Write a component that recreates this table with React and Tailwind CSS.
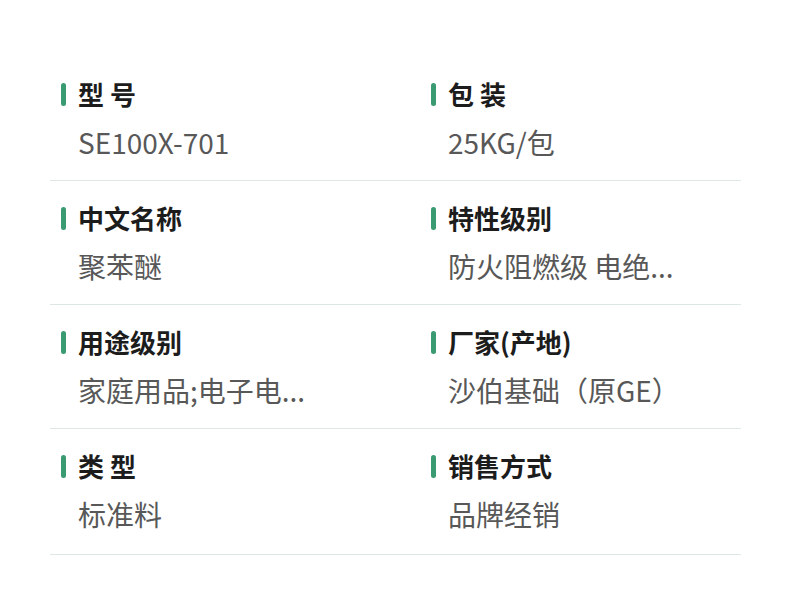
import React from 'react';

const rows = [
  [
    { label: '型 号', value: 'SE100X-701' },
    { label: '包 装', value: '25KG/包' },
  ],
  [
    { label: '中文名称', value: '聚苯醚' },
    { label: '特性级别', value: '防火阻燃级 电绝...' },
  ],
  [
    { label: '用途级别', value: '家庭用品;电子电...' },
    { label: '厂家(产地)', value: '沙伯基础（原GE）' },
  ],
  [
    { label: '类 型', value: '标准料' },
    { label: '销售方式', value: '品牌经销' },
  ],
];

// Single spec cell: green marker, bold label, grey value
function SpecCell({ label, value }) {
  return (
    <div className="pl-[11px]">
      <div className="flex items-center h-[32px]">
        <span className="shrink-0 w-[5px] h-[23px] rounded-full bg-[#3a9a72] mr-[12px]" />
        <span className="text-[26px] leading-[32px] font-bold text-[#1c1c1c]">{label}</span>
      </div>
      <div className="mt-[14px] pl-[17px] text-[28px] leading-[36px] text-[#585858] whitespace-nowrap">
        {value}
      </div>
    </div>
  );
}

export default function App() {
  return (
    <div
      className="w-[790px] h-[600px] bg-white pt-[57px]"
      style={{ fontFamily: '"Noto Sans CJK SC", "Noto Sans", sans-serif' }}
    >
      <div className="mx-[50px] w-[691px]">
        {rows.map((row, i) => (
          <div
            key={i}
            className={`grid grid-cols-[370px_1fr] pt-[21px] border-b border-[#dde8e3] ${
              i === rows.length - 1 ? 'pb-[22px]' : 'pb-[20px]'
            }`}
          >
            {row.map((cell) => (
              <SpecCell key={cell.label} label={cell.label} value={cell.value} />
            ))}
          </div>
        ))}
      </div>
    </div>
  );
}
